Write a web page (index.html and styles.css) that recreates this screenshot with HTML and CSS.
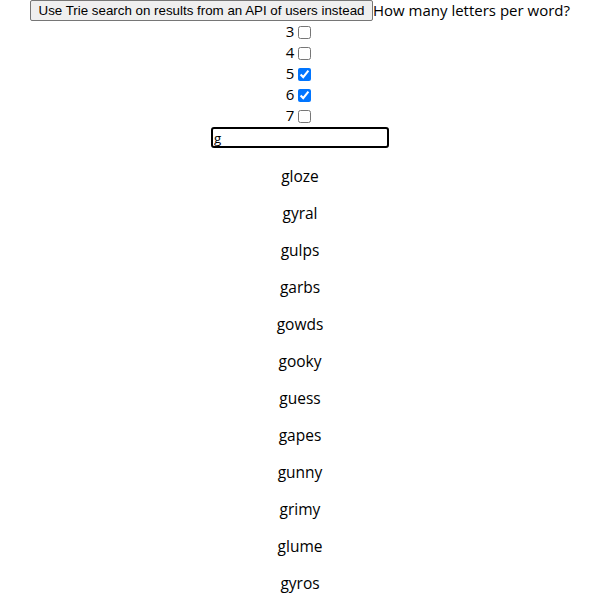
FILE: index.html
```html
<!DOCTYPE html>
<html>
<head>
<meta charset="utf-8">
<link rel="stylesheet" href="styles.css">
</head>
<body>
<div class="app">
  <div class="top"><button class="btn" type="button">Use Trie search on results from an API of users instead</button>How many letters per word?</div>
  <div class="row">3 <input type="checkbox"></div>
  <div class="row">4 <input type="checkbox"></div>
  <div class="row">5 <input type="checkbox" checked></div>
  <div class="row">6 <input type="checkbox" checked></div>
  <div class="row">7 <input type="checkbox"></div>
  <div class="field"><input class="search" type="text" value="g"></div>
  <div class="words">
    <p class="word">gloze</p>
    <p class="word">gyral</p>
    <p class="word">gulps</p>
    <p class="word">garbs</p>
    <p class="word">gowds</p>
    <p class="word">gooky</p>
    <p class="word">guess</p>
    <p class="word">gapes</p>
    <p class="word">gunny</p>
    <p class="word">grimy</p>
    <p class="word">glume</p>
    <p class="word">gyros</p>
  </div>
</div>
</body>
</html>
```
FILE: styles.css
```css
html, body {
  margin: 0;
  padding: 0;
  background: #fff;
}
.app {
  text-align: center;
  font-family: "Open Sans", "Noto Sans", sans-serif;
  font-size: 15px;
  line-height: 21px;
  color: #000;
}
.top {
  height: 21px;
}
.btn {
  font-family: "Liberation Sans", Arial, sans-serif;
  font-size: 13.33px;
  height: 21px;
  padding: 1px 7.5px;
  margin: 0;
  border: 1px solid #767676;
  border-radius: 2px;
  background: #efefef;
  color: #000;
  vertical-align: top;
}
.row {
  height: 21px;
}
.row input[type="checkbox"] {
  width: 13px;
  height: 13px;
  margin: 3px 3px 3px 0;
  vertical-align: -2px;
}
.field {
  height: 22px;
  padding-top: 1px;
}
.search {
  box-sizing: border-box;
  width: 178px;
  height: 21px;
  margin: 0;
  padding: 0 1px;
  border: 2px solid #000;
  border-radius: 3px;
  outline: none;
  font-family: "Open Sans", "Noto Sans", sans-serif;
  font-size: 13.33px;
  vertical-align: top;
}
.words {
  padding-top: 1px;
}
.word {
  margin: 16px 0;
  font-size: 15.5px;
  line-height: 21px;
}
```
